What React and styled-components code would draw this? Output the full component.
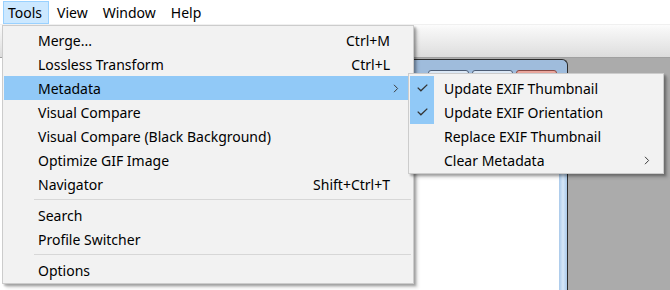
import React from "react";
import styled, { createGlobalStyle } from "styled-components";

const GlobalStyle = createGlobalStyle`
  html, body { margin: 0; padding: 0; background: #fff; overflow: hidden; }
  body { font-family: "Noto Sans", "Open Sans", sans-serif; }
`;

const FONT = `"Noto Sans", "Open Sans", sans-serif`;

const Page = styled.div`
  position: relative;
  width: 670px;
  height: 290px;
  overflow: hidden;
  display: flex;
  flex-direction: column;
  background: #fff;
  font-family: ${FONT};
  font-size: 14px;
  color: #000;
`;

const MenuBar = styled.div`
  height: 24px;
  display: flex;
  align-items: stretch;
  padding: 1px 0 0 3px;
  box-sizing: border-box;
  background: #fff;
`;

const BarItem = styled.div`
  display: flex;
  align-items: center;
  padding: 0 6px 0 4px;
  margin-right: 3px;
  border: 1px solid ${(p) => (p.$open ? "#99d1ff" : "transparent")};
  background: ${(p) => (p.$open ? "#cce8ff" : "transparent")};
  white-space: nowrap;
`;

const Workspace = styled.div`
  flex: 1;
  display: flex;
  flex-direction: column;
`;

const Toolbar = styled.div`
  height: 32px;
  flex: 0 0 auto;
  border-top: 1px solid #f0f0f0;
  border-bottom: 1px solid #a0a0a0;
  background: linear-gradient(#fcfcfc 0%, #f6f6f6 15%, #e6e6e6 70%, #dcdcdc 100%);
`;

const MdiRow = styled.div`
  flex: 1;
  display: flex;
  background: #ababab;
`;

const LeftPane = styled.div`
  width: 300px;
  background: #fff;
`;

const ChildWindow = styled.div`
  width: 267px;
  margin-top: 1px;
  display: flex;
  flex-direction: column;
  background: #9fbcdc;
  border: 1px solid #2b2b2b;
  border-left: none;
  border-bottom: none;
  border-radius: 0 6px 0 0;
`;

const TitleBar = styled.div`
  height: 30px;
  display: flex;
  justify-content: flex-end;
  gap: 3px;
  padding: 10px 10px 0 0;
  box-sizing: border-box;
`;

const CaptionButton = styled.div`
  width: 41px;
  height: 18px;
  box-sizing: border-box;
  border: 1px solid ${(p) => (p.$close ? "#8a4a44" : "#4d5d75")};
  border-radius: 3px;
  background: ${(p) => (p.$close ? "#e9a79d" : "#dce8f5")};
`;

const ClientRow = styled.div`
  flex: 1;
  display: flex;
`;

const Client = styled.div`
  flex: 1;
  background: #fff;
`;

const Frame = styled.div`
  width: 8px;
  background: linear-gradient(90deg, #a9c9ea, #d6e7f8 50%, #a9c9ea);
`;

const Menu = styled.div`
  position: absolute;
  left: ${(p) => p.$x}px;
  top: ${(p) => p.$y}px;
  width: ${(p) => p.$w}px;
  box-sizing: border-box;
  padding: 2px 2px 1px 1px;
  background: #f2f2f2;
  border: 1px solid #cccccc;
  box-shadow: 2px 2px 2px rgba(0, 0, 0, 0.28), 4px 4px 3px rgba(0, 0, 0, 0.12);
`;

const Item = styled.div`
  position: relative;
  height: 24px;
  display: flex;
  align-items: center;
  padding: 0 21px 0 34px;
  background: ${(p) => (p.$hl ? "#91c9f7" : "transparent")};
  white-space: nowrap;
`;

const Label = styled.span`
  flex: 1;
`;

const Shortcut = styled.span`
  margin-left: 20px;
`;

const Arrow = styled.svg`
  position: absolute;
  right: ${(p) => p.$right}px;
  top: 8px;
`;

const Check = styled.div`
  position: absolute;
  left: 0;
  top: 0;
  width: 24px;
  height: 24px;
  display: flex;
  align-items: center;
  justify-content: center;
  background: #91c9f7;
`;

const Separator = styled.div`
  height: 7px;
  display: flex;
  align-items: center;
  padding-left: 30px;
  &::after {
    content: "";
    flex: 1;
    height: 1px;
    background: #d7d7d7;
  }
`;

const ChevronIcon = ({ right }) => (
  <Arrow $right={right} width="6" height="9" viewBox="0 0 6 9">
    <path d="M1 0.8 L4.6 4.5 L1 8.2" fill="none" stroke="#3c3c3c" strokeWidth="1" />
  </Arrow>
);

const CheckIcon = () => (
  <svg width="11" height="8" viewBox="0 0 11 8">
    <path d="M0.7 3.6 L3.9 6.8 L10.3 0.6" fill="none" stroke="#333" strokeWidth="1.3" />
  </svg>
);

const mainItems = [
  { label: "Merge...", sc: "Ctrl+M" },
  { label: "Lossless Transform", sc: "Ctrl+L" },
  { label: "Metadata", sub: true, hl: true },
  { label: "Visual Compare" },
  { label: "Visual Compare (Black Background)" },
  { label: "Optimize GIF Image" },
  { label: "Navigator", sc: "Shift+Ctrl+T" },
  { sep: true },
  { label: "Search" },
  { label: "Profile Switcher" },
  { sep: true },
  { label: "Options" },
];

const subItems = [
  { label: "Update EXIF Thumbnail", checked: true },
  { label: "Update EXIF Orientation", checked: true },
  { label: "Replace EXIF Thumbnail" },
  { label: "Clear Metadata", sub: true },
];

export default function App() {
  return (
    <>
      <GlobalStyle />
      <Page>
        <MenuBar>
          <BarItem $open>Tools</BarItem>
          <BarItem>View</BarItem>
          <BarItem>Window</BarItem>
          <BarItem>Help</BarItem>
        </MenuBar>
        <Workspace>
          <Toolbar />
          <MdiRow>
            <LeftPane />
            <ChildWindow>
              <TitleBar>
                <CaptionButton />
                <CaptionButton />
                <CaptionButton $close />
              </TitleBar>
              <ClientRow>
                <Client />
                <Frame />
              </ClientRow>
            </ChildWindow>
          </MdiRow>
        </Workspace>

        <Menu $x={2} $y={25} $w={412}>
          {mainItems.map((it, i) =>
            it.sep ? (
              <Separator key={i} />
            ) : (
              <Item key={i} $hl={it.hl}>
                <Label>{it.label}</Label>
                {it.sc && <Shortcut>{it.sc}</Shortcut>}
                {it.sub && <ChevronIcon right={12} />}
              </Item>
            )
          )}
        </Menu>

        <Menu $x={408} $y={73} $w={256}>
          {subItems.map((it, i) => (
            <Item key={i}>
              {it.checked && (
                <Check>
                  <CheckIcon />
                </Check>
              )}
              <Label>{it.label}</Label>
              {it.sub && <ChevronIcon right={11} />}
            </Item>
          ))}
        </Menu>
      </Page>
    </>
  );
}
